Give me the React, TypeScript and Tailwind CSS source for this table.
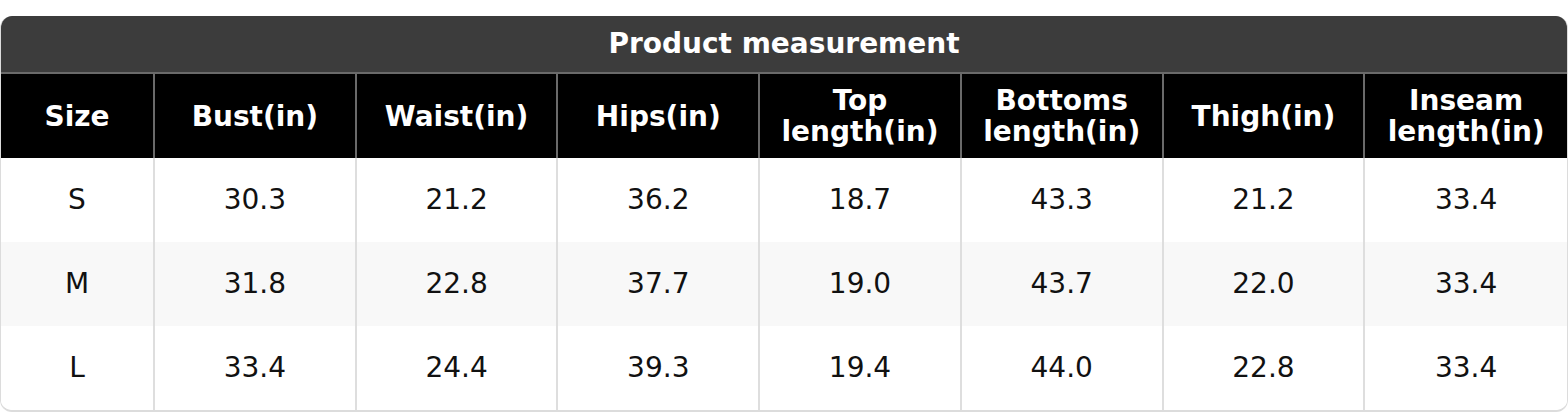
import React from 'react';

const headers: string[][] = [
  ['Size'],
  ['Bust(in)'],
  ['Waist(in)'],
  ['Hips(in)'],
  ['Top', 'length(in)'],
  ['Bottoms', 'length(in)'],
  ['Thigh(in)'],
  ['Inseam', 'length(in)'],
];

const rows: string[][] = [
  ['S', '30.3', '21.2', '36.2', '18.7', '43.3', '21.2', '33.4'],
  ['M', '31.8', '22.8', '37.7', '19.0', '43.7', '22.0', '33.4'],
  ['L', '33.4', '24.4', '39.3', '19.4', '44.0', '22.8', '33.4'],
];

export default function App() {
  return (
    <div className="w-[1568px] h-[412px] bg-white pt-4 font-['DejaVu_Sans',sans-serif]">
      <div className="rounded-[12px] overflow-hidden border-x border-b-2 border-[#dcdcdc]">
        {/* Title */}
        <div className="h-[58px] bg-[#3c3c3c] flex items-center justify-center text-white font-bold text-[28px] border-b-2 border-[#6a6a6a]">
          Product measurement
        </div>

        {/* Header */}
        <div className="grid grid-cols-[154px_repeat(7,1fr)] bg-black h-[84px]">
          {headers.map((h, i) => (
            <div
              key={i}
              className={`flex flex-col items-center justify-center text-white font-bold text-[28px] leading-[31px] ${i < headers.length - 1 ? 'border-r-2 border-[#6a6a6a]' : ''}`}
            >
              {h.map((line) => (
                <span key={line}>{line}</span>
              ))}
            </div>
          ))}
        </div>

        {/* Body */}
        {rows.map((r, ri) => (
          <div
            key={ri}
            className={`grid grid-cols-[154px_repeat(7,1fr)] h-[84px] ${ri === 1 ? 'bg-[#f8f8f8]' : 'bg-white'}`}
          >
            {r.map((v, ci) => (
              <div
                key={ci}
                className={`flex items-center justify-center text-[28px] text-[#111] ${ci < r.length - 1 ? 'border-r-2 border-[#dedede]' : ''}`}
              >
                {v}
              </div>
            ))}
          </div>
        ))}
      </div>
    </div>
  );
}
